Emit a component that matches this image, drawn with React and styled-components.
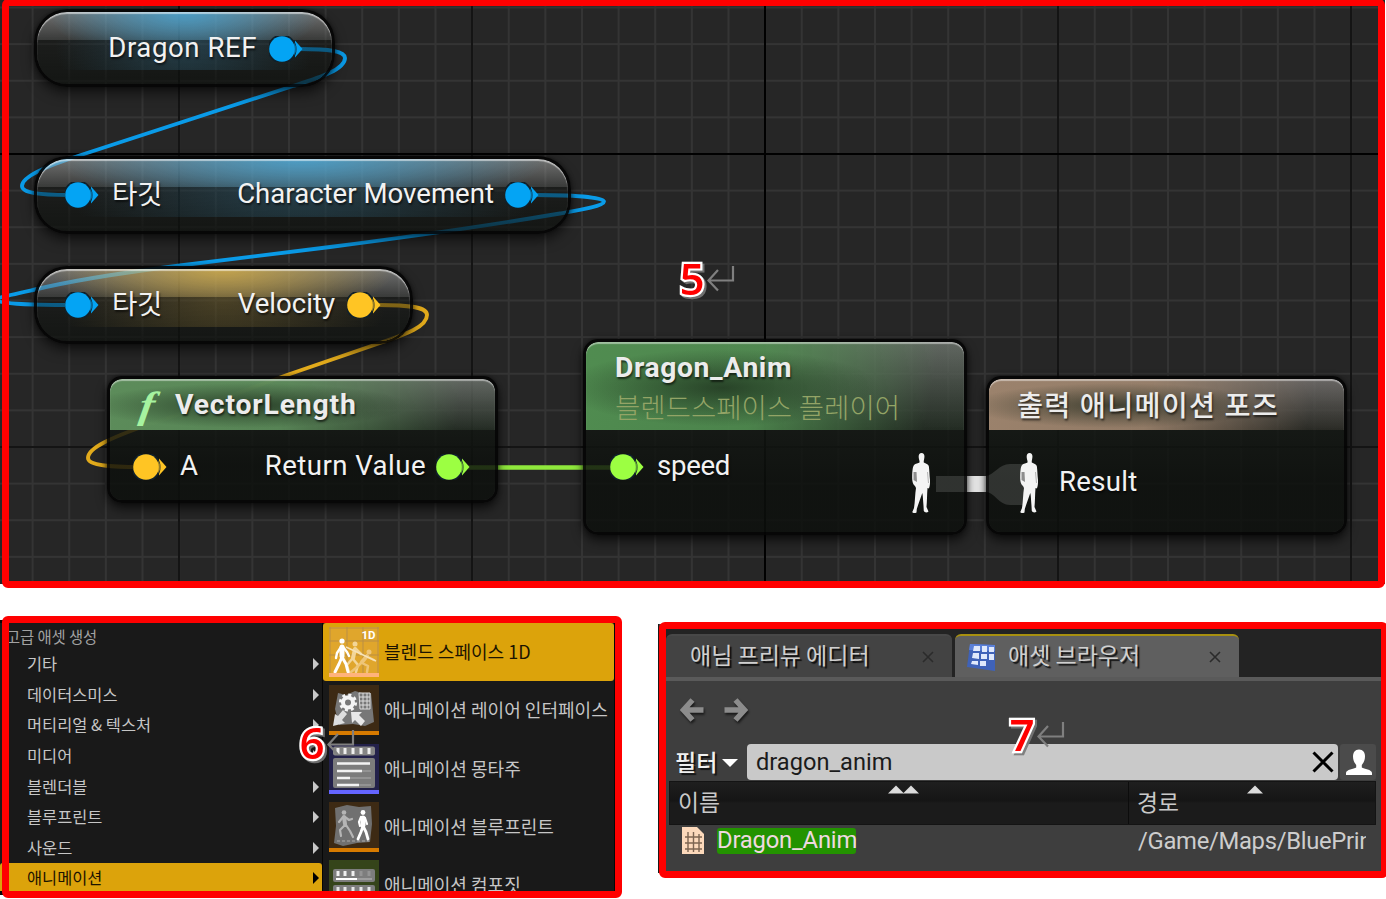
import React from "react";
import styled, { createGlobalStyle, css } from "styled-components";

const Global = createGlobalStyle`
  * { box-sizing: border-box; }
  body { margin: 0; background: #fff; }
`;

const latin = `Roboto, "Noto Sans CJK KR", sans-serif`;
const korean = `"Noto Sans CJK KR", Roboto, sans-serif`;

const Page = styled.main`
  width: 1386px;
  height: 899px;
  overflow: hidden;
  position: relative;
  display: flex;
  flex-direction: column;
  background: #fff;
  font-family: ${latin};
`;

const LowerRow = styled.div`
  display: flex;
  align-items: flex-start;
`;

/* A captured window with a thick red outline laid over its edges */
const Shot = styled.section`
  position: relative;
  flex: none;
  width: ${(p) => p.$w}px;
  height: ${(p) => p.$h}px;
  margin: ${(p) => p.$m || "0"};
  &::after {
    content: "";
    position: absolute;
    inset: ${(p) => p.$frame};
    border: 7px solid #ff0000;
    border-radius: 6px;
    pointer-events: none;
  }
`;

/* ---------- graph canvas ---------- */

const Canvas = styled.div`
  position: relative;
  width: 100%;
  height: 100%;
  overflow: hidden;
  background-color: #262626;
  background-image:
    linear-gradient(#000, #000),
    linear-gradient(#000, #000),
    linear-gradient(90deg, #141414 2px, transparent 2px),
    linear-gradient(#141414 2px, transparent 2px),
    linear-gradient(90deg, #343434 2px, transparent 2px),
    linear-gradient(#343434 2px, transparent 2px);
  background-size: 2px 100%, 100% 2px, 293px 100%, 100% 293px, 36.625px 100%, 100% 36.625px;
  background-position: 764px 0, 0 153px, 178px 0, 0 153px, -5px 0, 0 6.5px;
  background-repeat: no-repeat, no-repeat, repeat, repeat, repeat, repeat;
`;

const Wires = styled.svg`
  position: absolute;
  inset: 0;
  fill: none;
  stroke-width: 3.9;
`;

const placed = css`
  position: absolute;
  left: ${(p) => p.$x}px;
  top: ${(p) => p.$y}px;
  width: ${(p) => p.$w}px;
  height: ${(p) => p.$h}px;
`;

const Pill = styled.div`
  ${placed}
  display: flex;
  align-items: center;
  justify-content: space-between;
  padding: 1px 29px 0 28px;
  border: 3px solid rgba(4, 4, 4, 0.92);
  border-radius: 33px;
  background:
    radial-gradient(ellipse 46% 190% at 50% 0, rgba(${(p) => p.$tint}, 0.85), rgba(${(p) => p.$tint}, 0.45) 50%, rgba(${(p) => p.$tint}, 0) 100%) 0 0 / 100% 28px no-repeat,
    linear-gradient(rgba(255, 255, 255, 0.36), rgba(255, 255, 255, 0.13)) 0 0 / 100% 28px no-repeat,
    radial-gradient(ellipse 44% 320% at 50% 0, rgba(${(p) => p.$tint}, 0.26), rgba(${(p) => p.$tint}, 0) 100%) 0 28px / 100% 30px no-repeat,
    linear-gradient(rgba(14, 17, 14, 0.25), rgba(14, 17, 14, 0.4) 40%, rgba(14, 17, 14, 0.75));
  background-clip: padding-box;
  background-origin: padding-box;
  box-shadow: inset 0 2px 1px rgba(255, 255, 255, 0.55), 0 7px 12px rgba(0, 0, 0, 0.5), 0 0 4px rgba(0, 0, 0, 0.5);
`;

const Box = styled.div`
  ${placed}
  display: flex;
  flex-direction: column;
  border: 3px solid rgba(4, 4, 4, 0.92);
  border-radius: 15px;
  box-shadow: 0 6px 11px rgba(0, 0, 0, 0.6), 0 0 4px rgba(0, 0, 0, 0.5);
  overflow: hidden;
`;

const BoxHead = styled.div`
  height: ${(p) => p.$h}px;
  flex: none;
  display: flex;
  flex-direction: ${(p) => (p.$stack ? "column" : "row")};
  align-items: ${(p) => (p.$stack ? "flex-start" : "center")};
  padding: ${(p) => p.$pad};
  border-radius: 12px 12px 0 0;
  background:
    radial-gradient(ellipse 42% 44% at 36% 52%, rgba(20, 32, 20, 0.66), rgba(20, 32, 20, 0) 100%),
    linear-gradient(100deg, rgba(${(p) => p.$tint}, 1) 0%, rgba(${(p) => p.$tint}, 0.92) 45%, rgba(${(p) => p.$tint}, 0.1) 90%),
    linear-gradient(rgba(120, 120, 120, 0.75), rgba(28, 32, 28, 0.8));
  box-shadow: inset 0 2px 1px rgba(255, 255, 255, 0.45);
`;

const BoxBody = styled.div`
  flex: 1;
  display: flex;
  justify-content: space-between;
  align-items: flex-start;
  padding: ${(p) => p.$pad};
  background: linear-gradient(rgba(18, 22, 18, 0.84), rgba(12, 15, 12, 0.84) 50%);
`;

const Port = styled.div`
  display: flex;
  align-items: center;
  gap: ${(p) => p.$gap || 13}px;
  height: ${(p) => p.$h || 30}px;
`;

const NodeText = styled.span`
  font: 400 27.6px/34px ${latin};
  letter-spacing: ${(p) => p.$ls || 0}px;
  color: #f2f2f2;
  white-space: nowrap;
  text-shadow: 1px 2px 2px rgba(0, 0, 0, 0.6);
  position: relative;
  top: ${(p) => p.$dy || 0}px;
`;

const NodeTitle = styled(NodeText)`
  font-weight: ${(p) => p.$weight || 700};
  font-size: 28.3px;
  color: #ececec;
`;

const SubTitle = styled(NodeText)`
  font-weight: 300;
  font-size: 27.5px;
  color: #93a466;
  text-shadow: none;
`;

const FnMark = styled.span`
  width: 45px;
  flex: none;
  font: italic 700 38px/44px "Liberation Serif", serif;
  color: #a6f3a0;
  padding-left: 10px;
  transform: skewX(-8deg) scaleX(1.2);
  transform-origin: 14px 60%;
`;

const PinSvg = styled.svg`
  flex: none;
  display: block;
`;

const Pin = ({ color }) => (
  <PinSvg width="34" height="26" viewBox="0 0 34 26">
    <path d="M26 4.5 L33.5 13 L26 21.5Z" fill={color} />
    <circle cx="13" cy="13" r="14.6" fill="#10202a" />
    <path d="M25 6.5 Q30 13 25 19.5Z" fill={color} opacity=".55" />
    <circle cx="13" cy="13" r="12.8" fill={color} />
  </PinSvg>
);

const Pose = () => (
  <PinSvg width="20" height="62" viewBox="0 0 20 62">
    <path fill="#f4f4f4" d="M10.5 1 C13 1 13.8 3 13.3 6 C13 8.500 12.600 9 12.800 10.500 C15 11.500 17 12 17.800 14 C18.500 19 18.400 23 19 28 C19.200 32 18.600 36 17.600 36.500 L16.500 36 C16 42 16 50 15.500 55 L17.500 59.500 C16 61 13.500 60.500 12.800 59 L12.500 54 C12 48 12 44 11.300 41 C9.500 46 7.500 52 5.800 57 L5.500 60.500 C4 61.500 1.500 61.200 1.300 60 L3 56 C4 50 4 42 5 36 L4 34 C2 33 1 29 1.200 25 C1.300 20 1.500 15 3 13 C4.500 11.500 7.500 11.500 8.500 10.500 C8.800 9 8 8 7.800 6 C7.300 3 8.300 1 10.500 1Z" />
    <path d="M2.500 20 L5.500 20 L6 30 L2.500 28Z" fill="#8e8e8e" />
    <path d="M16.500 20 L17.500 31" stroke="#b5b5b5" />
  </PinSvg>
);

/* ---------- numbered marks ---------- */

const Mark = styled.div`
  position: absolute;
  z-index: 3;
  left: ${(p) => p.$x}px;
  top: ${(p) => p.$y}px;
  display: flex;
  align-items: flex-start;
`;

const Digit = styled.span`
  width: 26px;
  text-align: center;
  font: 600 44px/48px "Open Sans", "Noto Sans", sans-serif;
  color: #f00;
  -webkit-text-stroke: 4.4px #fff;
  paint-order: stroke fill;
  filter: drop-shadow(2px 2px 0.5px rgba(120, 120, 120, 0.9));
`;

const ReturnIcon = styled.svg`
  margin: 11px 0 0 2px;
  fill: none;
  stroke: #7f7f7f;
  stroke-width: 2.2;
`;

const NumberMark = ({ n, x, y }) => (
  <Mark $x={x} $y={y}>
    <Digit>{n}</Digit>
    <ReturnIcon width="28" height="28" viewBox="0 0 28 28">
      <path d="M26 1V15.500H1.500M11 5L1.500 15.500L11 25.500" />
    </ReturnIcon>
  </Mark>
);

/* ---------- context menu ---------- */

const MenuShell = styled.div`
  display: flex;
  width: 100%;
  height: 100%;
  padding: 3px 4px 4px 0;
  background: #060606;
  overflow: hidden;
  font-family: ${korean};
`;

const MenuList = styled.div`
  width: 322px;
  flex: none;
  background: #191919;
  display: flex;
  flex-direction: column;
  overflow: hidden;
`;

const MenuHeading = styled.div`
  flex: none;
  height: 26px;
  padding-left: 6px;
  font-size: 15.4px;
  line-height: 26px;
  color: #a2a2a2;
  letter-spacing: -0.1px;
`;

const MenuItem = styled.div`
  flex: none;
  height: 30.6px;
  display: flex;
  align-items: center;
  justify-content: space-between;
  padding: 0 3px 0 27px;
  font-size: 16.4px;
  line-height: 28px;
  border-radius: 3px;
  color: ${(p) => (p.$on ? "#1c1400" : "#c6c6c6")};
  background: ${(p) => (p.$on ? "#dca30b" : "transparent")};
`;

const MenuText = styled.span`
  padding-bottom: 2px;
`;

const Caret = styled.i`
  border-left: 6px solid ${(p) => (p.$on ? "#000" : "#c8c8c8")};
  border-top: 6px solid transparent;
  border-bottom: 6px solid transparent;
`;

const SubMenu = styled.div`
  margin-left: 1px;
  width: 291px;
  flex: none;
  background: #191919;
  display: flex;
  flex-direction: column;
  overflow: hidden;
`;

const AssetItem = styled.div`
  flex: none;
  height: 58.3px;
  display: flex;
  align-items: center;
  gap: 5px;
  padding-left: 6px;
  font-size: 18.05px;
  line-height: 28px;
  white-space: nowrap;
  border-radius: 3px;
  color: ${(p) => (p.$on ? "#1c1400" : "#c6c6c6")};
  background: ${(p) => (p.$on ? "#dca30b" : "transparent")};
`;

const Thumb = styled.svg`
  flex: none;
  width: 50px;
  height: 50px;
  display: block;
`;

const Walker = (props) => (
  <g {...props} fill="none" strokeLinecap="round" strokeLinejoin="round">
    <circle cx="0" cy="-15" r="2.600" stroke="none" fill={props.stroke} />
    <path strokeWidth="5" d="M0 -9 L0 0" />
    <path strokeWidth="2.400" d="M-1 -9 L-5 -3 L-6 2 M1 -9 L5 -4 L7 0" />
    <path strokeWidth="3" d="M0 1 L-3 8 L-7 16 M0 1 L4 8 L6 16" />
  </g>
);

const thumbs = {
  blend: (
    <Thumb viewBox="0 0 50 50">
      <rect width="50" height="50" fill="#e0a62c" />
      <path d="M0 14H50M0 28H50M18 0V46M34 0V46M49 0V46M1 0V46M0 1H50" stroke="#b98e45" strokeWidth="1" />
      <g fill="none" stroke="#f3d698" strokeLinecap="round" strokeLinejoin="round">
        <circle cx="26" cy="17" r="2.500" fill="#f3d698" stroke="none" />
        <path strokeWidth="4" d="M26 22L24 31" />
        <path strokeWidth="2.500" d="M24 32L29 38L27 45M23 32L18 38L20 45M27 22L32 27" />
      </g>
      <g fill="none" stroke="#eec577" strokeLinecap="round" strokeLinejoin="round">
        <circle cx="40" cy="25" r="2.500" fill="#eec577" stroke="none" />
        <path strokeWidth="4" d="M38 29L33 35" />
        <path strokeWidth="2.500" d="M33 36L39 39L38 45M32 36L27 41L22 45M39 30L45 33" />
      </g>
      <Walker stroke="#ffffff" transform="translate(13 29)" />
      <path d="M17 20L47 34" stroke="#f7e3b8" strokeWidth="1.500" />
      <text x="46.500" y="12" textAnchor="end" fontFamily="Roboto" fontWeight="700" fontSize="11.500" fill="#fff">1D</text>
      <rect y="46" width="50" height="4" fill="#ffb37b" />
    </Thumb>
  ),
  layer: (
    <Thumb viewBox="0 0 50 50">
      <rect width="50" height="50" fill="#3d2a14" />
      <path d="M9 8L17 10L26 6L33 8L42 8L45 37L36 41L24 39L10 40L6 24Z" fill="#777" />
      <path d="M30 8H41V24H31ZM30 12H41M30 16H41M31 20H41M34 8V24M38 8V24" stroke="#ddd" strokeWidth="1" fill="none" />
      <circle cx="19" cy="17.500" r="5" fill="none" stroke="#f4f4f4" strokeWidth="4" />
      <circle cx="19" cy="17.500" r="7.600" fill="none" stroke="#f4f4f4" strokeWidth="3" strokeDasharray="3 2.970" />
      <path d="M4 41L6 29L9 31L14 25L18 29L13 35L16 38Z" fill="#dedede" />
      <path d="M22 27L33 27L30 30L36 36L32 41L26 35L23 38Z" fill="#e8e8e8" />
      <rect y="46" width="50" height="4" fill="#d67a00" />
    </Thumb>
  ),
  montage: (
    <Thumb viewBox="0 0 50 50">
      <rect width="50" height="50" fill="#23214a" />
      <rect x="4" y="2.500" width="42" height="9" rx="2" fill="#858585" />
      <path d="M9 4V10M16 4V10M24 4V10M32 4V10M40 4V10" stroke="#eee" strokeWidth="3" />
      <rect x="4" y="14" width="42" height="30" rx="2" fill="#7c7c7c" />
      <path d="M8 19.500H41M8 27H33M8 34H21M8 41H30" stroke="#f2f2f2" strokeWidth="2.400" />
      <path d="M33 27H42M21 34H42M30 41H42" stroke="#9b9b9b" strokeWidth="1.500" />
      <rect y="46" width="50" height="4" fill="#6464ff" />
    </Thumb>
  ),
  blueprint: (
    <Thumb viewBox="0 0 50 50">
      <rect width="50" height="50" fill="#3d2a14" />
      <path d="M6 6L18 3L30 5L42 4L43 22L41 40L28 41L14 44L5 41L7 24Z" fill="#707070" />
      <path d="M8 39H40" stroke="#aaa" strokeDasharray="3 2" />
      <g fill="none" stroke="#b5b5b5" strokeLinecap="round" strokeLinejoin="round">
        <circle cx="15" cy="10.500" r="2.300" fill="#b5b5b5" stroke="none" />
        <path strokeWidth="4" d="M15 15L16 22" />
        <path strokeWidth="2.200" d="M14 15L10 20M16 15L20 18L23 17M16 23L11 28L12 34M17 23L21 29L24 35" />
      </g>
      <g fill="none" stroke="#fff" strokeLinecap="round" strokeLinejoin="round">
        <circle cx="34" cy="10.500" r="2.400" fill="#fff" stroke="none" />
        <path strokeWidth="5" d="M34 16L34 23" />
        <path strokeWidth="2.200" d="M32 15L30 20L31 24M36 16L38 22" />
        <path strokeWidth="2.800" d="M34 24L32 30L29 37M34 24L37 30L39 37" />
      </g>
      <rect y="46" width="50" height="4" fill="#d67a00" />
    </Thumb>
  ),
  composite: (
    <Thumb viewBox="0 0 50 50">
      <rect width="50" height="50" fill="#35441a" />
      <rect x="4" y="9" width="42" height="13" rx="2" fill="#7d7d7d" />
      <path d="M9 11V16M16 11V16M24 11V16" stroke="#f0f0f0" strokeWidth="3" />
      <path d="M32 11V16M40 11V16" stroke="#949494" strokeWidth="3" />
      <path d="M7 19H28" stroke="#fff" strokeWidth="2" />
      <path d="M28 19H43" stroke="#aaa" strokeWidth="1.500" />
      <rect x="4" y="25" width="42" height="13" rx="2" fill="#7d7d7d" />
      <path d="M9 27V33M16 27V33M24 27V33M32 27V33M40 27V33" stroke="#e6e6e6" strokeWidth="3" />
    </Thumb>
  ),
};

/* ---------- asset browser ---------- */

const Browser = styled.div`
  width: 100%;
  height: 100%;
  padding: 5px 5px 0 8px;
  background: #3e3e3e;
  overflow: hidden;
  display: flex;
  flex-direction: column;
  box-shadow: inset 1px 0 0 #1a1a1a;
`;

const Tabs = styled.div`
  flex: none;
  height: 52px;
  display: flex;
  align-items: stretch;
  gap: 3px;
  padding-top: 5px;
  background: #232323;
  border-bottom: 4px solid #5a5a5a;
`;

const Tab = styled.div`
  display: flex;
  align-items: center;
  width: ${(p) => p.$w}px;
  padding: ${(p) => p.$pad};
  gap: 11px;
  font: 400 23px/30px ${korean};
  white-space: nowrap;
  color: #d0d0d0;
  text-shadow: 2px 2px 1px rgba(0, 0, 0, 0.8);
  border-radius: 6px 6px 0 0;
  background: ${(p) => (p.$on ? "#5f5f5f" : "#434343")};
  border-top: 2px solid ${(p) => (p.$on ? "#a8900f" : "#484848")};
  & > svg:last-child { margin-left: auto; }
`;

const TabText = styled.span`
  padding-bottom: 5px;
`;

const TabClose = () => (
  <svg width="12" height="12" viewBox="0 0 12 12">
    <path d="M1 1L11 11M11 1L1 11" stroke="#2b2b2b" strokeWidth="1.600" />
  </svg>
);

const Toolbar = styled.div`
  flex: none;
  height: 63px;
  display: flex;
  align-items: center;
  gap: 20px;
  padding: 0 0 5px 14px;
  filter: drop-shadow(1px 2px 1px rgba(0, 0, 0, 0.6));
`;

const Search = styled.div`
  flex: none;
  height: 36px;
  display: flex;
  align-items: center;
  padding: 0 5px 0 9px;
  color: #f0f0f0;
`;

const FilterLabel = styled.span`
  width: 43px;
  padding-bottom: 2px;
  font: 500 23px/30px ${korean};
  white-space: nowrap;
  text-shadow: 2px 2px 1px rgba(0, 0, 0, 0.7);
`;

const Down = styled.i`
  margin: 2px 9px 0 4px;
  border-top: 8px solid #fff;
  border-left: 8px solid transparent;
  border-right: 8px solid transparent;
`;

const Field = styled.div`
  width: 591px;
  height: 36px;
  display: flex;
  align-items: center;
  justify-content: space-between;
  padding: 0 4px 0 9px;
  border-radius: 4px;
  background: #c9c9c9;
  color: #1b1b1b;
  font: 400 23.6px/34px ${latin};
`;

const UserButton = styled.div`
  width: 36px;
  height: 36px;
  margin-left: 2px;
  display: flex;
  align-items: center;
  justify-content: center;
  background: #4b4b4b;
  border-radius: 3px;
`;

const HeadRow = styled.div`
  flex: none;
  margin: 1px 5px 0 3px;
  height: 44px;
  display: flex;
  background: linear-gradient(#1f1f1f, #151515 45%, #1b1b1b 50%, #1b1b1b);
  border: 1px solid #141414;
`;

const HeadCell = styled.div`
  position: relative;
  width: ${(p) => p.$w}px;
  padding: 4px 0 0 8px;
  border-left: ${(p) => (p.$line ? "1px solid #0c0c0c" : "0")};
  font: 400 22.8px/32px ${korean};
  color: #c9c9c9;
`;

const SortMark = styled.svg`
  position: absolute;
  top: 3px;
  left: ${(p) => p.$x}px;
  fill: #dcdcdc;
`;

const AssetRow = styled.div`
  flex: none;
  height: 31px;
  display: flex;
  align-items: center;
  padding-left: 16px;
  font: 400 23.8px/26px ${latin};
  color: #cdcdcd;
`;

const AssetName = styled.div`
  width: 435px;
  margin-left: 13px;
  display: flex;
`;

const Match = styled.span`
  width: 139px;
  height: 26px;
  border-radius: 3px;
  background: #239300;
  color: #f0d9e0;
  line-height: 25px;
  white-space: nowrap;
  letter-spacing: -0.2px;
`;

const AssetPath = styled.span`
  width: 228px;
  margin-left: -14px;
  overflow: hidden;
  white-space: nowrap;
  letter-spacing: -0.3px;
`;

const BLUE = "#04a4f4";
const GOLD = "#ffc524";
const LIME = "#9cff42";

const menu = ["기타", "데이터스미스", "머티리얼 & 텍스처", "미디어", "블렌더블", "블루프린트", "사운드", "애니메이션"];
const assets = [
  ["블렌드 스페이스 1D", "blend"],
  ["애니메이션 레이어 인터페이스", "layer"],
  ["애니메이션 몽타주", "montage"],
  ["애니메이션 블루프린트", "blueprint"],
  ["애니메이션 컴포짓", "composite"],
];

const Graph = () => (
  <Canvas>
    <Wires width="1386" height="584">
      <path stroke="#0a9be8" d="M300 49 C330 49 345 51 345 58 C345 70 318 78 293 86 L81 155 C50 165 22 176 22 186 C22 193 40 195 68 195" />
      <path stroke="#0a9be8" d="M535 195 C570 195 604 197 604 201.500 C604 206 580 210 560 213.500 C480 227 400 238 330 247 L180 265.500 C120 273 70 281 33 290 C10 295 -4 298 -4 300 C-4 303 25 305 68 305" />
      <path stroke="#e2ab1c" d="M378 305 C410 305 427 307 427 315 C427 328 400 336 380 343 L287 375 C240 392 200 408 150 424 C110 438 88 448 88 458 C88 466 115 467 140 467" />
      <path stroke="#8fe83c" strokeWidth="4.500" d="M468 467.500H615" />
      <path fill="#ebebeb" d="M936 476H986C994 475 999 464 1010 464H1024V505H1010C999 505 994 492 986 492H936Z" />
    </Wires>

    <Pill $x={34} $y={9} $w={301} $h={78} $tint="70,165,212">
      <span />
      <Port $gap={12}><NodeText $ls={0.55} $dy={-1}>Dragon REF</NodeText><Pin color={BLUE} /></Port>
    </Pill>
    <Pill $x={34} $y={155.5} $w={537} $h={78} $tint="70,165,212">
      <Port><Pin color={BLUE} /><NodeText $ls={-0.3}>타깃</NodeText></Port>
      <Port $gap={11}><NodeText $dy={-1}>Character Movement</NodeText><Pin color={BLUE} /></Port>
    </Pill>
    <Pill $x={34} $y={265.5} $w={379} $h={78} $tint="210,172,70">
      <Port><Pin color={BLUE} /><NodeText $ls={-0.3}>타깃</NodeText></Port>
      <Port $gap={12}><NodeText $dy={-1}>Velocity</NodeText><Pin color={GOLD} /></Port>
    </Pill>

    <Box $x={107} $y={376} $w={391} $h={127}>
      <BoxHead $h={51} $pad="0 0 0 20px" $tint="92,140,90">
        <FnMark>f</FnMark>
        <NodeTitle $ls={0.85}>VectorLength</NodeTitle>
      </BoxHead>
      <BoxBody $pad="22px 25px 0 23px">
        <Port><Pin color={GOLD} /><NodeText $dy={-1}>A</NodeText></Port>
        <Port $gap={10}><NodeText $ls={0.45} $dy={-1}>Return Value</NodeText><Pin color={LIME} /></Port>
      </BoxBody>
    </Box>

    <Box $x={583} $y={339} $w={384} $h={196}>
      <BoxHead $h={88} $pad="9px 0 0 29px" $stack $tint="80,140,80">
        <NodeTitle $ls={0.6}>Dragon_Anim</NodeTitle>
        <SubTitle $dy={7}>블렌드스페이스 플레이어</SubTitle>
      </BoxHead>
      <BoxBody $pad="22px 33px 0 24px">
        <Port><Pin color={LIME} /><NodeText $ls={-0.3} $dy={-1}>speed</NodeText></Port>
        <Port $h={62}><Pose /></Port>
      </BoxBody>
    </Box>

    <Box $x={986} $y={376} $w={361} $h={159}>
      <BoxHead $h={51} $pad="4px 0 0 28px" $tint="155,130,108">
        <NodeTitle $weight={500} $ls={1.25}>출력 애니메이션 포즈</NodeTitle>
      </BoxHead>
      <BoxBody $pad="22px 0 0 30px">
        <Port $h={62} $gap={20}><Pose /><NodeText $ls={0.3} $dy={-1}>Result</NodeText></Port>
      </BoxBody>
    </Box>
  </Canvas>
);

export default function App() {
  return (
    <Page>
      <Global />
      <Shot $w={1385} $h={584} $frame="-1px 0 -4px 2px">
        <Graph />
      </Shot>
      <LowerRow>
        <Shot $w={619} $h={275} $m="36px 0 0 0" $frame="-4px -3px -3px 2px">
          <MenuShell>
            <MenuList>
              <MenuHeading>고급 애셋 생성</MenuHeading>
              {menu.map((name) => (
                <MenuItem key={name} $on={name === "애니메이션"}>
                  <MenuText>{name}</MenuText>
                  <Caret $on={name === "애니메이션"} />
                </MenuItem>
              ))}
            </MenuList>
            <SubMenu>
              {assets.map(([name, icon], i) => (
                <AssetItem key={name} $on={i === 0}>
                  {thumbs[icon]}
                  <MenuText>{name}</MenuText>
                </AssetItem>
              ))}
            </SubMenu>
          </MenuShell>
        </Shot>
        <Shot $w={728} $h={249} $m="40px 0 0 39px" $frame="-2px -2px -5px 1px">
          <Browser>
            <Tabs>
              <Tab $w={286} $pad="0 18px 0 24px"><TabText>애님 프리뷰 에디터</TabText><TabClose /></Tab>
              <Tab $w={284} $on $pad="0 18px 0 11px">
                <svg width="31" height="30" viewBox="0 0 31 30">
                  <path d="M4 2L29 3L29 29L1 25Z" fill="#3f62b8" />
                  <path d="M4 2L29 3L29 9L3 8Z" fill="#5b80d8" />
                  <path d="M8 4L14 4V9L7 9ZM16 4L21 4V10H16ZM23 5H28V10H23ZM7 11L13 11V17L6 16ZM15 12H21V17H15ZM23 12H28V18H23ZM6 19L12 19V23L5 22ZM14 19H20V24H14Z" fill="#dfe8fb" />
                </svg>
                <TabText>애셋 브라우저</TabText>
                <TabClose />
              </Tab>
            </Tabs>
            <Toolbar>
              <svg width="24" height="26" viewBox="0 0 24 26"><path d="M12.500 3L3.500 13L12.500 23M4 13H23.500" fill="none" stroke="#8c8c8c" strokeWidth="5.500" /></svg>
              <svg width="24" height="26" viewBox="0 0 24 26"><path d="M11.500 3L20.500 13L11.500 23M20 13H.5" fill="none" stroke="#8c8c8c" strokeWidth="5.500" /></svg>
            </Toolbar>
            <Search>
              <FilterLabel>필터</FilterLabel>
              <Down />
              <Field>
                dragon_anim
                <svg width="22" height="22" viewBox="0 0 22 22"><path d="M1.500 1.500L20.500 20.500M20.500 1.500L1.500 20.500" stroke="#000" strokeWidth="3" /></svg>
              </Field>
              <UserButton>
                <svg width="28" height="28" viewBox="0 0 28 28">
                  <path fill="#fff" d="M15 1.500C19 1.500 21 4.500 21 8.500C21 12 19.500 15 17.800 17V19.500C20 21 28 21.500 28 25V27H2V25C2 21.500 10 21 12.200 19.500V17C10.500 15 9 12 9 8.500C9 4.500 11 1.500 15 1.500Z" />
                </svg>
              </UserButton>
            </Search>
            <HeadRow>
              <HeadCell $w={458}>
                이름
                <SortMark $x={218} width="32" height="9" viewBox="0 0 32 9"><path d="M0 8.500L8 .5L16 8.500ZM15 8.500L23 .5L31 8.500Z" /></SortMark>
              </HeadCell>
              <HeadCell $w={247} $line>
                경로
                <SortMark $x={118} width="16" height="9" viewBox="0 0 16 9"><path d="M0 8.500L8 .5L16 8.500Z" /></SortMark>
              </HeadCell>
            </HeadRow>
            <AssetRow>
              <svg width="22" height="27" viewBox="0 0 22 27">
                <path d="M0 0H15L22 7V27H0Z" fill="#fcd9bb" />
                <path d="M3 10H20M3 16H20M3 22H20M6 5V25M11.500 5V25M17 7V25" stroke="#7d6552" strokeWidth="1.400" />
              </svg>
              <AssetName><Match>Dragon_Anim</Match></AssetName>
              <AssetPath>/Game/Maps/BluePrin</AssetPath>
            </AssetRow>
          </Browser>
        </Shot>
      </LowerRow>
      <NumberMark n="5" x={679} y={254} />
      <NumberMark n="6" x={299} y={718} />
      <NumberMark n="7" x={1009} y={710} />
    </Page>
  );
}
